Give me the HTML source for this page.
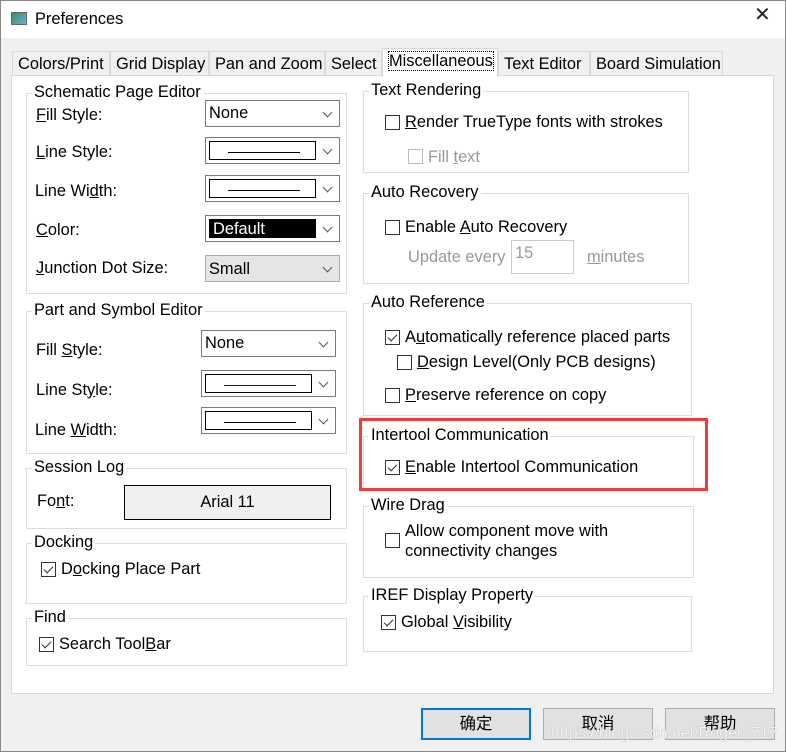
<!DOCTYPE html><html><head><style>
*{margin:0;padding:0;box-sizing:border-box}
body{width:786px;height:752px;background:#f0f0f0;font-family:"Liberation Sans","Noto Sans CJK SC",sans-serif;font-size:16.4px;color:#000;position:relative;overflow:hidden}
.a{position:absolute;white-space:nowrap;line-height:19px}
.g{position:absolute;border:1px solid #dcdcdc}
.g>.l{position:absolute;left:5px;top:-11px;background:#fff;padding:0 2px;line-height:19px}
.cb{position:absolute;width:15px;height:15px;border:1px solid #333;background:#fff}
.cb.c::after{content:"";position:absolute;left:4px;top:1px;width:4px;height:8px;border:solid #333;border-width:0 1.5px 1.5px 0;transform:rotate(45deg)}
.cb.d{border-color:#bbb}
.sel{position:absolute;border:1px solid #7a7a7a;background:#fff;height:27px}
.sel::after{content:"";position:absolute;right:8px;top:8px;width:6px;height:6px;border:solid #555;border-width:0 1px 1px 0;transform:rotate(45deg)}
.inner{position:absolute;left:3px;top:3px;bottom:3px;border:1px solid #000}
u{text-decoration:underline}
.btn{position:absolute;height:32px;width:110px;border:1px solid #adadad;background:#e1e1e1;text-align:center;line-height:30px}
.tab{position:absolute;top:51px;height:25px;border:1px solid #d9d9d9;background:#f0f0f0;padding:3px 5px;white-space:nowrap;line-height:19px}
</style></head><body>
<div style="position:absolute;left:0;top:0;width:786px;height:38px;background:#fff"></div>
<div style="position:absolute;left:11px;top:12px;width:16px;height:13px;border:1px solid #666;background:linear-gradient(135deg,#3a8a6a,#6ab0d0)"></div>
<div class="a" style="left:35px;top:10px">Preferences</div>
<div class="a" style="left:754px;top:6px;font-size:20px;color:#222">✕</div>
<div style="position:absolute;left:0;top:0;width:786px;height:752px;border:1px solid #888;pointer-events:none"></div>
<div style="position:absolute;left:11px;top:75px;width:763px;height:619px;background:#fff;border:1px solid #d9d9d9"></div>
<div class="tab" style="left:12px;width:98px">Colors/Print</div>
<div class="tab" style="left:110px;width:99px">Grid Display</div>
<div class="tab" style="left:209px;width:116px">Pan and Zoom</div>
<div class="tab" style="left:325px;width:57px">Select</div>
<div class="tab" style="left:382px;top:48px;width:116px;height:29px;border-bottom:none;background:#fff;padding:3px 6px"><span style="outline:1px dotted #000">Miscellaneous</span></div>
<div class="tab" style="left:498px;width:92px">Text Editor</div>
<div class="tab" style="left:590px;width:133px">Board Simulation</div>

<div class="g" style="left:26px;top:93px;width:321px;height:201px"><span class="l">Schematic Page Editor</span></div>
<div class="a" style="left:36px;top:106px"><u>F</u>ill Style:</div>
<div class="sel" style="left:205px;top:100px;width:135px"><span class="a" style="left:3px;top:3px">None</span></div>
<div class="a" style="left:36px;top:143px"><u>L</u>ine Style:</div>
<div class="sel" style="left:205px;top:137px;width:135px"><div class="inner" style="width:107px"><div style="position:absolute;left:18px;top:10px;width:72px;border-top:1px solid #000"></div></div></div>
<div class="a" style="left:35px;top:182px">Line Wi<u>d</u>th:</div>
<div class="sel" style="left:205px;top:175px;width:135px"><div class="inner" style="width:107px"><div style="position:absolute;left:18px;top:10px;width:72px;border-top:1px solid #000"></div></div></div>
<div class="a" style="left:36px;top:221px"><u>C</u>olor:</div>
<div class="sel" style="left:205px;top:215px;width:135px"><div class="inner" style="width:107px;background:#000;color:#fff;padding:0 3px;line-height:18px">Default</div></div>
<div class="a" style="left:36px;top:259px"><u>J</u>unction Dot Size:</div>
<div class="sel" style="left:205px;top:255px;width:135px;background:#e5e5e5;border-color:#adadad"><span class="a" style="left:3px;top:4px">Small</span></div>

<div class="g" style="left:26px;top:311px;width:321px;height:143px"><span class="l">Part and Symbol Editor</span></div>
<div class="a" style="left:36px;top:341px">Fill <u>S</u>tyle:</div>
<div class="sel" style="left:201px;top:330px;width:135px"><span class="a" style="left:3px;top:3px">None</span></div>
<div class="a" style="left:36px;top:381px">Line St<u>y</u>le:</div>
<div class="sel" style="left:201px;top:370px;width:135px"><div class="inner" style="width:107px"><div style="position:absolute;left:18px;top:10px;width:72px;border-top:1px solid #00f"></div></div></div>
<div class="a" style="left:35px;top:421px">Line <u>W</u>idth:</div>
<div class="sel" style="left:201px;top:407px;width:135px"><div class="inner" style="width:107px"><div style="position:absolute;left:18px;top:10px;width:72px;border-top:1px solid #000"></div></div></div>

<div class="g" style="left:26px;top:468px;width:321px;height:61px"><span class="l">Session Log</span></div>
<div class="a" style="left:37px;top:492px">Fo<u>n</u>t:</div>
<div class="a" style="left:124px;top:485px;width:207px;height:35px;border:1px solid #000;background:#f0f0f0;text-align:center;line-height:33px">Arial 11</div>

<div class="g" style="left:26px;top:543px;width:321px;height:61px"><span class="l">Docking</span></div>
<div class="cb c" style="left:41px;top:562px"></div>
<div class="a" style="left:61px;top:560px">D<u>o</u>cking Place Part</div>

<div class="g" style="left:26px;top:618px;width:321px;height:48px"><span class="l">Find</span></div>
<div class="cb c" style="left:39px;top:637px"></div>
<div class="a" style="left:59px;top:635px">Search Tool<u>B</u>ar</div>

<div class="g" style="left:363px;top:91px;width:326px;height:82px"><span class="l">Text Rendering</span></div>
<div class="cb" style="left:385px;top:115px"></div>
<div class="a" style="left:405px;top:113px"><u>R</u>ender TrueType fonts with strokes</div>
<div class="cb d" style="left:408px;top:149px"></div>
<div class="a" style="left:428px;top:148px;color:#999">Fill <u>t</u>ext</div>

<div class="g" style="left:363px;top:193px;width:326px;height:91px"><span class="l">Auto Recovery</span></div>
<div class="cb" style="left:385px;top:220px"></div>
<div class="a" style="left:405px;top:218px">Enable <u>A</u>uto Recovery</div>
<div class="a" style="left:408px;top:248px;color:#999">Update every</div>
<div class="a" style="left:511px;top:240px;width:63px;height:34px;border:1px solid #ccc;background:#fff;color:#999;padding:3px 3px">15</div>
<div class="a" style="left:587px;top:248px;color:#999"><u>m</u>inutes</div>

<div class="g" style="left:363px;top:303px;width:329px;height:113px"><span class="l">Auto Reference</span></div>
<div class="cb c" style="left:385px;top:330px"></div>
<div class="a" style="left:405px;top:328px">A<u>u</u>tomatically reference placed parts</div>
<div class="cb" style="left:397px;top:355px"></div>
<div class="a" style="left:417px;top:353px"><u>D</u>esign Level(Only PCB designs)</div>
<div class="cb" style="left:385px;top:388px"></div>
<div class="a" style="left:405px;top:386px"><u>P</u>reserve reference on copy</div>

<div class="g" style="left:363px;top:436px;width:331px;height:55px"><span class="l">Intertool Communication</span></div>
<div class="cb c" style="left:385px;top:460px"></div>
<div class="a" style="left:405px;top:458px"><u>E</u>nable Intertool Communication</div>
<div style="position:absolute;left:359px;top:418px;width:349px;height:73px;border:3px solid #f03c3c"></div>

<div class="g" style="left:363px;top:506px;width:331px;height:72px"><span class="l">Wire Drag</span></div>
<div class="cb" style="left:385px;top:533px"></div>
<div class="a" style="left:405px;top:522px">Allow component move with</div>
<div class="a" style="left:405px;top:542px">connectivity changes</div>

<div class="g" style="left:363px;top:596px;width:329px;height:56px"><span class="l">IREF Display Property</span></div>
<div class="cb c" style="left:381px;top:615px"></div>
<div class="a" style="left:401px;top:613px">Global <u>V</u>isibility</div>

<div class="btn" style="left:421px;top:708px;border:2px solid #0078d7;line-height:28px">确定</div>
<div class="btn" style="left:543px;top:708px">取消</div>
<div class="btn" style="left:665px;top:708px">帮助</div>
<div class="a" style="left:551px;top:724px;font-size:16px;color:rgba(255,255,255,.85);text-shadow:0 0 1px #999">https://blog.csdn.net/Roger_717</div>
</body></html>
